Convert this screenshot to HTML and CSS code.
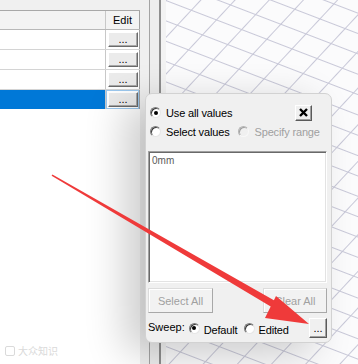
FILE: index.html
```html
<!DOCTYPE html>
<html lang="en">

<head>
    <meta charset="UTF-8">
    <meta name="viewport" content="width=device-width, initial-scale=1.0">
    <title>Sweep Values</title>
    <link rel="stylesheet" href="styles.css">
</head>

<body>
    <div class="workspace">
        <div class="param-pane">
            <div class="pane-top"></div>
            <div class="param-grid">
                <div class="grid-row grid-head">
                    <div class="cell-name"></div>
                    <div class="cell-edit">Edit</div>
                </div>
                <div class="grid-row">
                    <div class="cell-name"></div>
                    <div class="cell-edit"><button class="dots-btn">...</button></div>
                </div>
                <div class="grid-row">
                    <div class="cell-name"></div>
                    <div class="cell-edit"><button class="dots-btn">...</button></div>
                </div>
                <div class="grid-row">
                    <div class="cell-name"></div>
                    <div class="cell-edit"><button class="dots-btn">...</button></div>
                </div>
                <div class="grid-row selected">
                    <div class="cell-name"></div>
                    <div class="cell-edit"><button class="dots-btn">...</button></div>
                </div>
            </div>
            <div class="watermark"><span class="wm-icon"></span>大众知识</div>
        </div>
        <div class="gutter"></div>
        <div class="sash"></div>
        <div class="edge"></div>
        <div class="viewport">
            <svg class="grid-canvas" width="192" height="364">
                <defs>
                    <pattern id="gridA" width="40" height="19" patternUnits="userSpaceOnUse"
                        patternTransform="rotate(21)">
                        <rect width="40" height="1" fill="#c8c8d8"></rect>
                    </pattern>
                    <pattern id="gridB" width="40" height="25" patternUnits="userSpaceOnUse"
                        patternTransform="rotate(-47)">
                        <rect width="40" height="1" fill="#c8c8d8"></rect>
                    </pattern>
                </defs>
                <rect width="192" height="364" fill="#fbfbfc"></rect>
                <rect width="192" height="364" fill="url(#gridA)"></rect>
                <rect width="192" height="364" fill="url(#gridB)"></rect>
            </svg>
        </div>
    </div>

    <div class="sweep-popup">
        <div class="choice-row">
            <span class="radio checked"></span>
            <span class="choice-label">Use all values</span>
            <button class="close-btn" title="Close">
                <svg width="9" height="9" viewBox="0 0 9 9">
                    <path d="M1 1 L8 8 M8 1 L1 8" stroke="#000" stroke-width="2.4"></path>
                </svg>
            </button>
        </div>
        <div class="choice-row">
            <span class="radio"></span>
            <span class="choice-label">Select values</span>
            <span class="radio disabled spaced"></span>
            <span class="choice-label muted">Specify range</span>
        </div>

        <div class="value-list">0mm</div>

        <div class="list-actions">
            <button class="action-btn" disabled>Select All</button>
            <button class="action-btn wide" disabled>Clear All</button>
        </div>

        <div class="sweep-row">
            <span class="sweep-label">Sweep:</span>
            <span class="radio checked"></span>
            <span class="choice-label">Default</span>
            <span class="radio spaced-sm"></span>
            <span class="choice-label">Edited</span>
            <button class="more-btn">...</button>
        </div>
    </div>

    <svg class="callout" width="358" height="364">
        <polygon fill="#ef3a3a"
            points="52.4,174.4 273.9,300.2 276,296 309,324 265,318 270.7,306.4 51.6,175.7"></polygon>
    </svg>
</body>

</html>
```

FILE: styles.css
```css
body {
    margin: 0;
    width: 358px;
    height: 364px;
    overflow: hidden;
    position: relative;
    font-family: "Liberation Sans", Arial, sans-serif;
    font-size: 11px;
    color: #000;
    background: #f0f0f0;
}

button {
    font-family: inherit;
    font-size: 11px;
    padding: 0;
    margin: 0;
    color: #000;
}

.workspace {
    display: flex;
    height: 364px;
}

/* left parameter grid */
.param-pane {
    width: 140px;
    background: #fff;
    display: flex;
    flex-direction: column;
}

.pane-top {
    height: 10px;
    background: #f0f0f0;
}

.grid-row {
    display: grid;
    grid-template-columns: 105px 35px;
    height: 20px;
    box-sizing: border-box;
    border-bottom: 1px solid #d4d4d4;
}

.grid-head {
    background: #f3f3f3;
    border-top: 1px solid #a8a8a8;
    border-bottom-color: #b8b8b8;
}

.cell-edit {
    box-sizing: border-box;
    border-left: 1px solid #c8c8c8;
    border-right: 1px solid #a0a0a0;
    display: flex;
    align-items: center;
    padding-left: 2px;
}

.grid-head .cell-edit {
    justify-content: center;
    padding-left: 0;
    font-size: 11px;
}

.grid-row.selected {
    border-bottom-color: #fff;
}

.grid-row.selected .cell-name {
    background: #0078d7;
}

.grid-row.selected .cell-edit {
    box-shadow: inset 0 0 0 1px #9cc8ee;
}

.dots-btn {
    width: 30px;
    height: 15px;
    border: 1px solid;
    border-color: #fff #6a6a6a #6a6a6a #fff;
    background: #ebebeb;
    box-shadow: inset -1px -1px #a8a8a8;
    line-height: 11px;
}

.watermark {
    margin-top: auto;
    padding: 0 0 6px 5px;
    display: flex;
    align-items: center;
    gap: 3px;
    color: #dadada;
    font-family: "Liberation Sans", "Noto Sans CJK SC", sans-serif;
    font-size: 10px;
}

.wm-icon {
    width: 8px;
    height: 8px;
    border: 1px solid #dadada;
    border-radius: 2px;
}

/* splitter between panes */
.gutter {
    width: 9px;
    background: #f0f0f0;
    border-right: 1px solid #a4a4a4;
}

.sash {
    width: 9px;
    background: #ededed;
    border-right: 2px solid #8e8e8e;
}

.edge {
    width: 5px;
    background: #f3f3f3;
}

.viewport {
    flex: 1;
    overflow: hidden;
}

.grid-canvas {
    display: block;
}

/* sweep popup */
.sweep-popup {
    position: absolute;
    left: 145px;
    top: 93px;
    width: 187px;
    height: 250px;
    box-sizing: border-box;
    padding: 9px 4px 4px 2px;
    background: #f0f0f0;
    border: 1px solid #d2d2d2;
    border-radius: 7px;
    box-shadow: -20px 10px 40px rgba(0, 0, 0, 0.2);
    display: flex;
    flex-direction: column;
}

.choice-row {
    display: flex;
    align-items: center;
    height: 19px;
}

.radio {
    width: 11px;
    height: 11px;
    box-sizing: border-box;
    flex: none;
    border-radius: 50%;
    border: 1px solid;
    border-color: #7c7c7c #e6e6e6 #e6e6e6 #7c7c7c;
    background: #fff;
    box-shadow: inset 1px 1px 0 #3c3c3c;
    margin-left: 2px;
    display: grid;
    place-items: center;
}

.radio.checked::after {
    content: "";
    width: 4px;
    height: 4px;
    border-radius: 50%;
    background: #000;
}

.radio.disabled {
    border-color: #b4b4b4 #f8f8f8 #f8f8f8 #b4b4b4;
    box-shadow: inset 1px 1px 0 #a0a0a0;
    background: #f0f0f0;
}

.radio.spaced {
    margin-left: 9px;
}

.radio.spaced-sm {
    margin-left: 6px;
}

.choice-label {
    margin-left: 5px;
    white-space: nowrap;
    letter-spacing: -0.15px;
}

.choice-label.muted {
    color: #a0a0a0;
}

.close-btn {
    margin-left: auto;
    margin-right: 15px;
    width: 17px;
    height: 16px;
    box-sizing: border-box;
    border: 1px solid;
    border-color: #fff #5a5a5a #5a5a5a #fff;
    box-shadow: inset -1px -1px #a0a0a0;
    background: #f0f0f0;
    display: grid;
    place-items: center;
}

.value-list {
    margin-top: 10px;
    height: 132px;
    box-sizing: border-box;
    background: #fff;
    border: 1px solid;
    border-color: #a0a0a0 #fff #fff #a0a0a0;
    box-shadow: inset 1px 1px #696969, inset -1px -1px #e3e3e3;
    padding: 3px;
    color: #5a5a5a;
    font-size: 10px;
    line-height: 12px;
}

.list-actions {
    display: flex;
    justify-content: space-between;
    margin-top: 5px;
}

.action-btn {
    width: 65px;
    height: 25px;
    box-sizing: border-box;
    border: 1px solid;
    border-color: #dcdcdc #a8a8a8 #a8a8a8 #dcdcdc;
    box-shadow: inset 1px 1px #fff;
    background: #f2f2f2;
    color: #a0a0a0;
}

.action-btn.wide {
    width: 64px;
}

.sweep-row {
    display: flex;
    align-items: center;
    height: 20px;
    margin-top: 5px;
}

.sweep-label {
    margin-bottom: 3px;
}

.sweep-row .radio {
    margin-left: 4px;
}

.sweep-row .radio.spaced-sm {
    margin-left: 6px;
}

.sweep-row .choice-label {
    margin-top: 3px;
    margin-left: 4px;
}

.more-btn {
    margin-left: auto;
    width: 18px;
    height: 20px;
    box-sizing: border-box;
    border: 1px solid;
    border-color: #fff #5a5a5a #5a5a5a #fff;
    box-shadow: inset -1px -1px #a0a0a0;
    background: #f0f0f0;
    line-height: 14px;
}

/* red annotation arrow */
.callout {
    position: absolute;
    left: 0;
    top: 0;
    pointer-events: none;
}
```
